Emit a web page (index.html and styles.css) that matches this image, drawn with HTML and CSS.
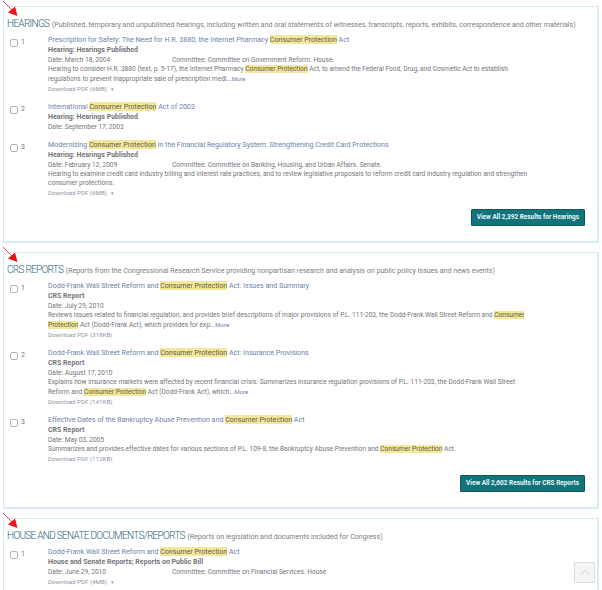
FILE: index.html
```html
<!DOCTYPE html>
<html lang="en">
<head>
<meta charset="utf-8">
<title>Search results</title>
<link rel="stylesheet" href="styles.css">
</head>
<body>
<section class="panel panel-hearings">
  <svg class="arrow" viewBox="0 0 20 20"><path d="M1 1 L11 11" class="arrow-line"/><path d="M6 12.500 L13 6.500 L15.500 16 Z" class="arrow-head"/></svg>
  <h2 class="heading"><span class="heading-main">HEARINGS</span> <span class="heading-note">(Published, temporary and unpublished hearings, including written and oral statements of witnesses, transcripts, reports, exhibits, correspondence and other materials)</span></h2>
  <div class="results">
    <article class="result">
      <label class="pick"><span class="box"></span>1</label>
      <div class="body">
        <a class="title">Prescription for Safety: The Need for H.R. 3880, the Internet Pharmacy <mark>Consumer Protection</mark> Act</a>
        <div class="kind">Hearing: Hearings Published</div>
        <div class="meta"><span class="date">Date: March 18, 2004</span><span>Committee: Committee on Government Reform. House.</span></div>
        <p class="desc">Hearing to consider H.R. 3880 (text, p. 5-17), the Internet Pharmacy <mark>Consumer Protection</mark> Act, to amend the Federal Food, Drug, and Cosmetic Act to establish regulations to prevent inappropriate sale of prescription medi...<a class="more">More</a></p>
        <div class="dl">Download PDF (6MB) <span class="tri">▾</span></div>
      </div>
    </article>
    <article class="result">
      <label class="pick"><span class="box"></span>2</label>
      <div class="body">
        <a class="title">International <mark>Consumer Protection</mark> Act of 2003</a>
        <div class="kind">Hearing: Hearings Published</div>
        <div class="meta"><span class="date">Date: September 17, 2003</span></div>
      </div>
    </article>
    <article class="result">
      <label class="pick"><span class="box"></span>3</label>
      <div class="body">
        <a class="title">Modernizing <mark>Consumer Protection</mark> in the Financial Regulatory System: Strengthening Credit Card Protections</a>
        <div class="kind">Hearing: Hearings Published</div>
        <div class="meta"><span class="date">Date: February 12, 2009</span><span>Committee: Committee on Banking, Housing, and Urban Affairs. Senate.</span></div>
        <p class="desc">Hearing to examine credit card industry billing and interest rate practices, and to review legislative proposals to reform credit card industry regulation and strengthen consumer protections.</p>
        <div class="dl">Download PDF (6MB) <span class="tri">▾</span></div>
      </div>
    </article>
  </div>
  <div class="actions"><a class="view-all">View All 2,392 Results for Hearings</a></div>
</section>

<section class="panel panel-crs">
  <svg class="arrow" viewBox="0 0 20 20"><path d="M1 1 L11 11" class="arrow-line"/><path d="M6 12.500 L13 6.500 L15.500 16 Z" class="arrow-head"/></svg>
  <h2 class="heading"><span class="heading-main">CRS REPORTS</span> <span class="heading-note">(Reports from the Congressional Research Service providing nonpartisan research and analysis on public policy issues and news events)</span></h2>
  <div class="results">
    <article class="result">
      <label class="pick"><span class="box"></span>1</label>
      <div class="body">
        <a class="title">Dodd-Frank Wall Street Reform and <mark>Consumer Protection</mark> Act: Issues and Summary</a>
        <div class="kind">CRS Report</div>
        <div class="meta"><span class="date">Date: July 29, 2010</span></div>
        <p class="desc">Reviews issues related to financial regulation, and provides brief descriptions of major provisions of P.L. 111-203, the Dodd-Frank Wall Street Reform and <mark>Consumer Protection</mark> Act (Dodd-Frank Act), which provides for exp...<a class="more">More</a></p>
        <div class="dl">Download PDF (318KB)</div>
      </div>
    </article>
    <article class="result">
      <label class="pick"><span class="box"></span>2</label>
      <div class="body">
        <a class="title">Dodd-Frank Wall Street Reform and <mark>Consumer Protection</mark> Act: Insurance Provisions</a>
        <div class="kind">CRS Report</div>
        <div class="meta"><span class="date">Date: August 17, 2010</span></div>
        <p class="desc">Explains how insurance markets were affected by recent financial crisis. Summarizes insurance regulation provisions of P.L. 111-203, the Dodd-Frank Wall Street Reform and <mark>Consumer Protection</mark> Act (Dodd-Frank Act), which...<a class="more">More</a></p>
        <div class="dl">Download PDF (141KB)</div>
      </div>
    </article>
    <article class="result">
      <label class="pick"><span class="box"></span>3</label>
      <div class="body">
        <a class="title">Effective Dates of the Bankruptcy Abuse Prevention and <mark>Consumer Protection</mark> Act</a>
        <div class="kind">CRS Report</div>
        <div class="meta"><span class="date">Date: May 03, 2005</span></div>
        <p class="desc">Summarizes and provides effective dates for various sections of P.L. 109-8, the Bankruptcy Abuse Prevention and <mark>Consumer Protection</mark> Act.</p>
        <div class="dl">Download PDF (112KB)</div>
      </div>
    </article>
  </div>
  <div class="actions"><a class="view-all">View All 2,602 Results for CRS Reports</a></div>
</section>

<section class="panel panel-house">
  <svg class="arrow" viewBox="0 0 20 20"><path d="M1 1 L11 11" class="arrow-line"/><path d="M6 12.500 L13 6.500 L15.500 16 Z" class="arrow-head"/></svg>
  <h2 class="heading"><span class="heading-main">HOUSE AND SENATE DOCUMENTS/REPORTS</span> <span class="heading-note">(Reports on legislation and documents included for Congress)</span></h2>
  <div class="results">
    <article class="result">
      <label class="pick"><span class="box"></span>1</label>
      <div class="body">
        <a class="title">Dodd-Frank Wall Street Reform and <mark>Consumer Protection</mark> Act</a>
        <div class="kind">House and Senate Reports; Reports on Public Bill</div>
        <div class="meta"><span class="date">Date: June 29, 2010</span><span>Committee: Committee on Financial Services. House</span></div>
        <div class="dl">Download PDF (4MB) <span class="tri">▾</span></div>
      </div>
    </article>
  </div>
</section>

<a class="to-top"><svg viewBox="0 0 12 8"><path d="M1 6.500 L6 1.500 L11 6.500"/></svg></a>
</body>
</html>
```
FILE: styles.css
```css
* { box-sizing: border-box; }
html, body { height: 100%; overflow: hidden; }
body {
  margin: 0;
  padding: 6px 3px 0 3px;
  background: #fff;
  font-family: Roboto, "Liberation Sans", sans-serif;
  font-size: 6.600px;
  color: #72757b;
  display: flex;
  flex-direction: column;
  gap: 9px;
}
.panel {
  position: relative;
  flex: none;
  border: 1px solid #d6edf3;
  border-bottom-width: 2px;
  border-right-width: 2px;
  padding: 11px 0 0 3px;
}
.panel-hearings { height: 237px; }
.panel-crs { height: 257px; }
.panel-house { height: 90px; }
.arrow {
  position: absolute;
  left: -2px;
  top: -7px;
  width: 20px;
  height: 20px;
}
.arrow-line { stroke: #e8202a; stroke-width: 0.800; fill: none; }
.arrow-head { fill: #ee1111; }
.heading {
  margin: 0;
  font-weight: 400;
  line-height: 12px;
  white-space: nowrap;
}
.heading-main { font-size: 10px; font-weight: 300; color: #1f6478; letter-spacing: -0.700px; }
.heading-note { font-size: 7.100px; color: #7b7e84; }
.results {
  display: flex;
  flex-direction: column;
  gap: 8px;
  margin-top: 4px;
}
.result { display: flex; }
.pick {
  width: 41px;
  flex: none;
  display: flex;
  align-items: flex-start;
  gap: 3px;
  padding: 2px 0 0 3px;
  color: #72757b;
  font-size: 7px;
  line-height: 11px;
}
.box {
  width: 8px;
  height: 8px;
  margin-top: 2px;
  border: 1px solid #b5b5b5;
  border-radius: 2px;
}
.body { width: 483px; flex: none; }
.title { display: block; font-size: 7.100px; line-height: 10px; color: #6d82ad; }
mark { background: #f5e79a; color: #5c5c50; padding: 0; }
.kind { font-size: 7px; line-height: 10px; font-weight: 700; color: #72757b; }
.meta { display: flex; line-height: 10px; }
.date { width: 124px; flex: none; }
.desc { margin: 0; line-height: 9px; }
.more { font-size: 6px; color: #6d82ad; }
.dl { font-size: 6.200px; line-height: 10px; color: #8b97a5; }
.tri { font-size: 5px; margin-left: 2px; }
.actions {
  position: absolute;
  right: 12px;
  bottom: 15px;
}
.view-all {
  display: block;
  height: 17px;
  padding: 0 5px;
  background: #12737b;
  border: 1px solid #0c5a60;
  border-radius: 1px;
  color: #e8f8f8;
  font-size: 6.450px;
  font-weight: 700;
  line-height: 15px;
  white-space: nowrap;
}
.to-top {
  position: absolute;
  left: 574px;
  top: 562px;
  width: 21px;
  height: 21px;
  background: #f4f4f4;
  border: 1px solid #ddd;
  border-radius: 1px;
  display: flex;
  align-items: center;
  justify-content: center;
}
.to-top svg { width: 10px; height: 7px; }
.to-top path { fill: none; stroke: #c4c4c4; stroke-width: 1; }
```
